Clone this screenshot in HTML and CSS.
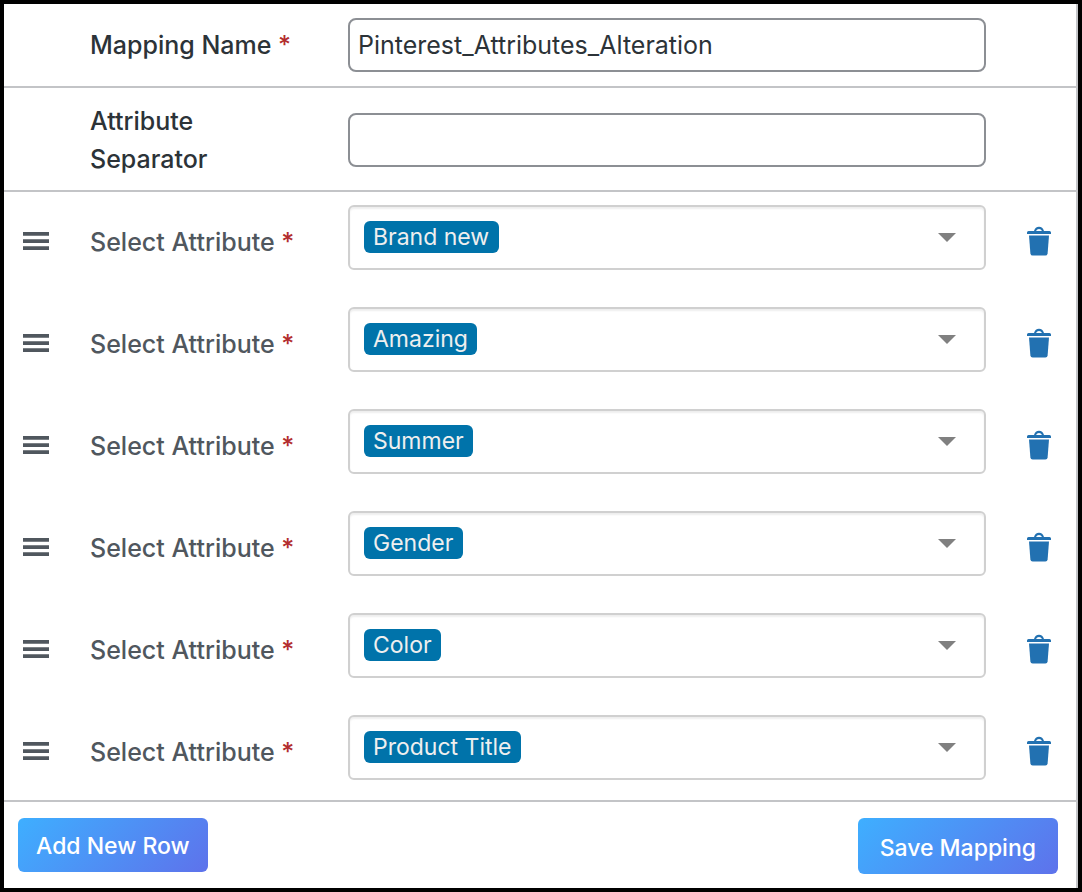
FILE: index.html
```html
<!DOCTYPE html>
<html lang="en">
<head>
<meta charset="utf-8">
<title>Attribute Mapping</title>
<link rel="stylesheet" href="styles.css">
</head>
<body>
<svg class="sprite" aria-hidden="true">
  <symbol id="handle" viewBox="0 0 26 18"><path d="M0 0h26v3.700H0zM0 7.200h26v3.700H0zM0 14.300h26V18H0z"/></symbol>
  <symbol id="arrow" viewBox="0 0 18 9"><path d="M0 0h18L9 9z"/></symbol>
  <symbol id="trash" viewBox="0 0 24 30"><path d="M7 5C8 2 9.500 .8 12 .8S16 2 17 5h5.500Q24 5 24 6.500V8H0V6.500Q0 5 1.500 5zM9 5h6q-1-2-3-2T9 5z" fill-rule="evenodd"/><path d="M2 9.500h20l-1.400 18q-.2 2-2.200 2H5.600q-2 0-2.200-2z"/></symbol>
</svg>
<form class="panel">
  <div class="row field">
    <label class="label" for="name">Mapping Name <span class="required">*</span></label>
    <input class="input" id="name" type="text" value="Pinterest_Attributes_Alteration">
  </div>
  <div class="row field separator">
    <label class="label" for="separator">Attribute Separator</label>
    <input class="input" id="separator" type="text">
  </div>
  <div class="list">
    <div class="row">
      <button class="icon-button handle" type="button" aria-label="Move row"><svg width="26" height="18"><use href="#handle"/></svg></button>
      <label class="label muted" for="a1">Select Attribute <span class="required">*</span></label>
      <div class="picker"><select class="chip" id="a1"><option>Brand new</option></select><svg class="arrow" width="18" height="9"><use href="#arrow"/></svg></div>
      <button class="icon-button trash" type="button" aria-label="Delete row"><svg width="24" height="30"><use href="#trash"/></svg></button>
    </div>
    <div class="row">
      <button class="icon-button handle" type="button" aria-label="Move row"><svg width="26" height="18"><use href="#handle"/></svg></button>
      <label class="label muted" for="a2">Select Attribute <span class="required">*</span></label>
      <div class="picker"><select class="chip" id="a2"><option>Amazing</option></select><svg class="arrow" width="18" height="9"><use href="#arrow"/></svg></div>
      <button class="icon-button trash" type="button" aria-label="Delete row"><svg width="24" height="30"><use href="#trash"/></svg></button>
    </div>
    <div class="row">
      <button class="icon-button handle" type="button" aria-label="Move row"><svg width="26" height="18"><use href="#handle"/></svg></button>
      <label class="label muted" for="a3">Select Attribute <span class="required">*</span></label>
      <div class="picker"><select class="chip" id="a3"><option>Summer</option></select><svg class="arrow" width="18" height="9"><use href="#arrow"/></svg></div>
      <button class="icon-button trash" type="button" aria-label="Delete row"><svg width="24" height="30"><use href="#trash"/></svg></button>
    </div>
    <div class="row">
      <button class="icon-button handle" type="button" aria-label="Move row"><svg width="26" height="18"><use href="#handle"/></svg></button>
      <label class="label muted" for="a4">Select Attribute <span class="required">*</span></label>
      <div class="picker"><select class="chip" id="a4"><option>Gender</option></select><svg class="arrow" width="18" height="9"><use href="#arrow"/></svg></div>
      <button class="icon-button trash" type="button" aria-label="Delete row"><svg width="24" height="30"><use href="#trash"/></svg></button>
    </div>
    <div class="row">
      <button class="icon-button handle" type="button" aria-label="Move row"><svg width="26" height="18"><use href="#handle"/></svg></button>
      <label class="label muted" for="a5">Select Attribute <span class="required">*</span></label>
      <div class="picker"><select class="chip" id="a5"><option>Color</option></select><svg class="arrow" width="18" height="9"><use href="#arrow"/></svg></div>
      <button class="icon-button trash" type="button" aria-label="Delete row"><svg width="24" height="30"><use href="#trash"/></svg></button>
    </div>
    <div class="row">
      <button class="icon-button handle" type="button" aria-label="Move row"><svg width="26" height="18"><use href="#handle"/></svg></button>
      <label class="label muted" for="a6">Select Attribute <span class="required">*</span></label>
      <div class="picker"><select class="chip" id="a6"><option>Product Title</option></select><svg class="arrow" width="18" height="9"><use href="#arrow"/></svg></div>
      <button class="icon-button trash" type="button" aria-label="Delete row"><svg width="24" height="30"><use href="#trash"/></svg></button>
    </div>
  </div>
  <div class="footer">
    <button class="action" type="button">Add New Row</button>
    <button class="action save" type="submit">Save Mapping</button>
  </div>
</form>
</body>
</html>
```
FILE: styles.css
```css
* {
  box-sizing: border-box;
}

body {
  margin: 0;
  min-height: 100vh;
  display: flex;
  border: 4px solid #000;
  background: #fff;
  color: #2c3338;
  font: 400 25px/38px Inter, "Liberation Sans", sans-serif;
}

.sprite {
  display: none;
}

.panel {
  flex: 1;
  border-right: 2px solid #c3c4c7;
}

.row {
  display: grid;
  grid-template-columns: 86px 258px minmax(0, 1fr) 90px;
  align-items: center;
}

.field {
  padding: 14px 0;
  border-bottom: 2px solid #c3c4c7;
}

.separator {
  padding-bottom: 12px;
}

.label {
  grid-column: 2;
  padding-right: 40px;
  font-weight: 500;
}

.muted {
  color: #50575e;
}

.required {
  color: #b32d2e;
}

.input {
  width: 100%;
  height: 54px;
  padding: 0 8px;
  border: 2px solid #8c8f94;
  border-radius: 8px;
  background: #fff;
  color: inherit;
  font: inherit;
}

.list {
  display: grid;
  gap: 37px;
  padding: 13px 0 20px;
  border-bottom: 2px solid #c3c4c7;
}

.list .label,
.icon-button {
  padding-top: 8px;
}

.icon-button {
  display: flex;
  border: 0;
  background: none;
}

.icon-button svg {
  display: block;
}

.handle {
  padding-left: 19px;
  fill: #50575e;
}

.trash {
  padding-left: 41px;
  fill: #2271b1;
}

.picker {
  display: flex;
  align-items: start;
  justify-content: space-between;
  height: 65px;
  padding: 14px 28px 0 14px;
  border: 2px solid #d0d0d0;
  border-radius: 6px;
  box-shadow: inset 0 2px 2px rgb(0 0 0 / 7%);
}

.chip {
  appearance: none;
  height: 32px;
  padding: 0 9px;
  border: 0;
  border-radius: 6px;
  background: #0073aa;
  color: #efefef;
  font: 400 23px/32px Inter, "Liberation Sans", sans-serif;
}

.arrow {
  margin-top: 12px;
  fill: #808080;
}

.footer {
  display: flex;
  align-items: start;
  justify-content: space-between;
  padding: 16px 18px 14px 14px;
}

.action {
  height: 54px;
  padding: 2px 18px 0;
  border: 0;
  border-radius: 6px;
  background: linear-gradient(135deg, #3eafff, #5e72eb);
  color: #fff;
  font: 500 23px/38px Inter, "Liberation Sans", sans-serif;
}

.save {
  height: 56px;
  padding: 4px 22px 0;
}
```
